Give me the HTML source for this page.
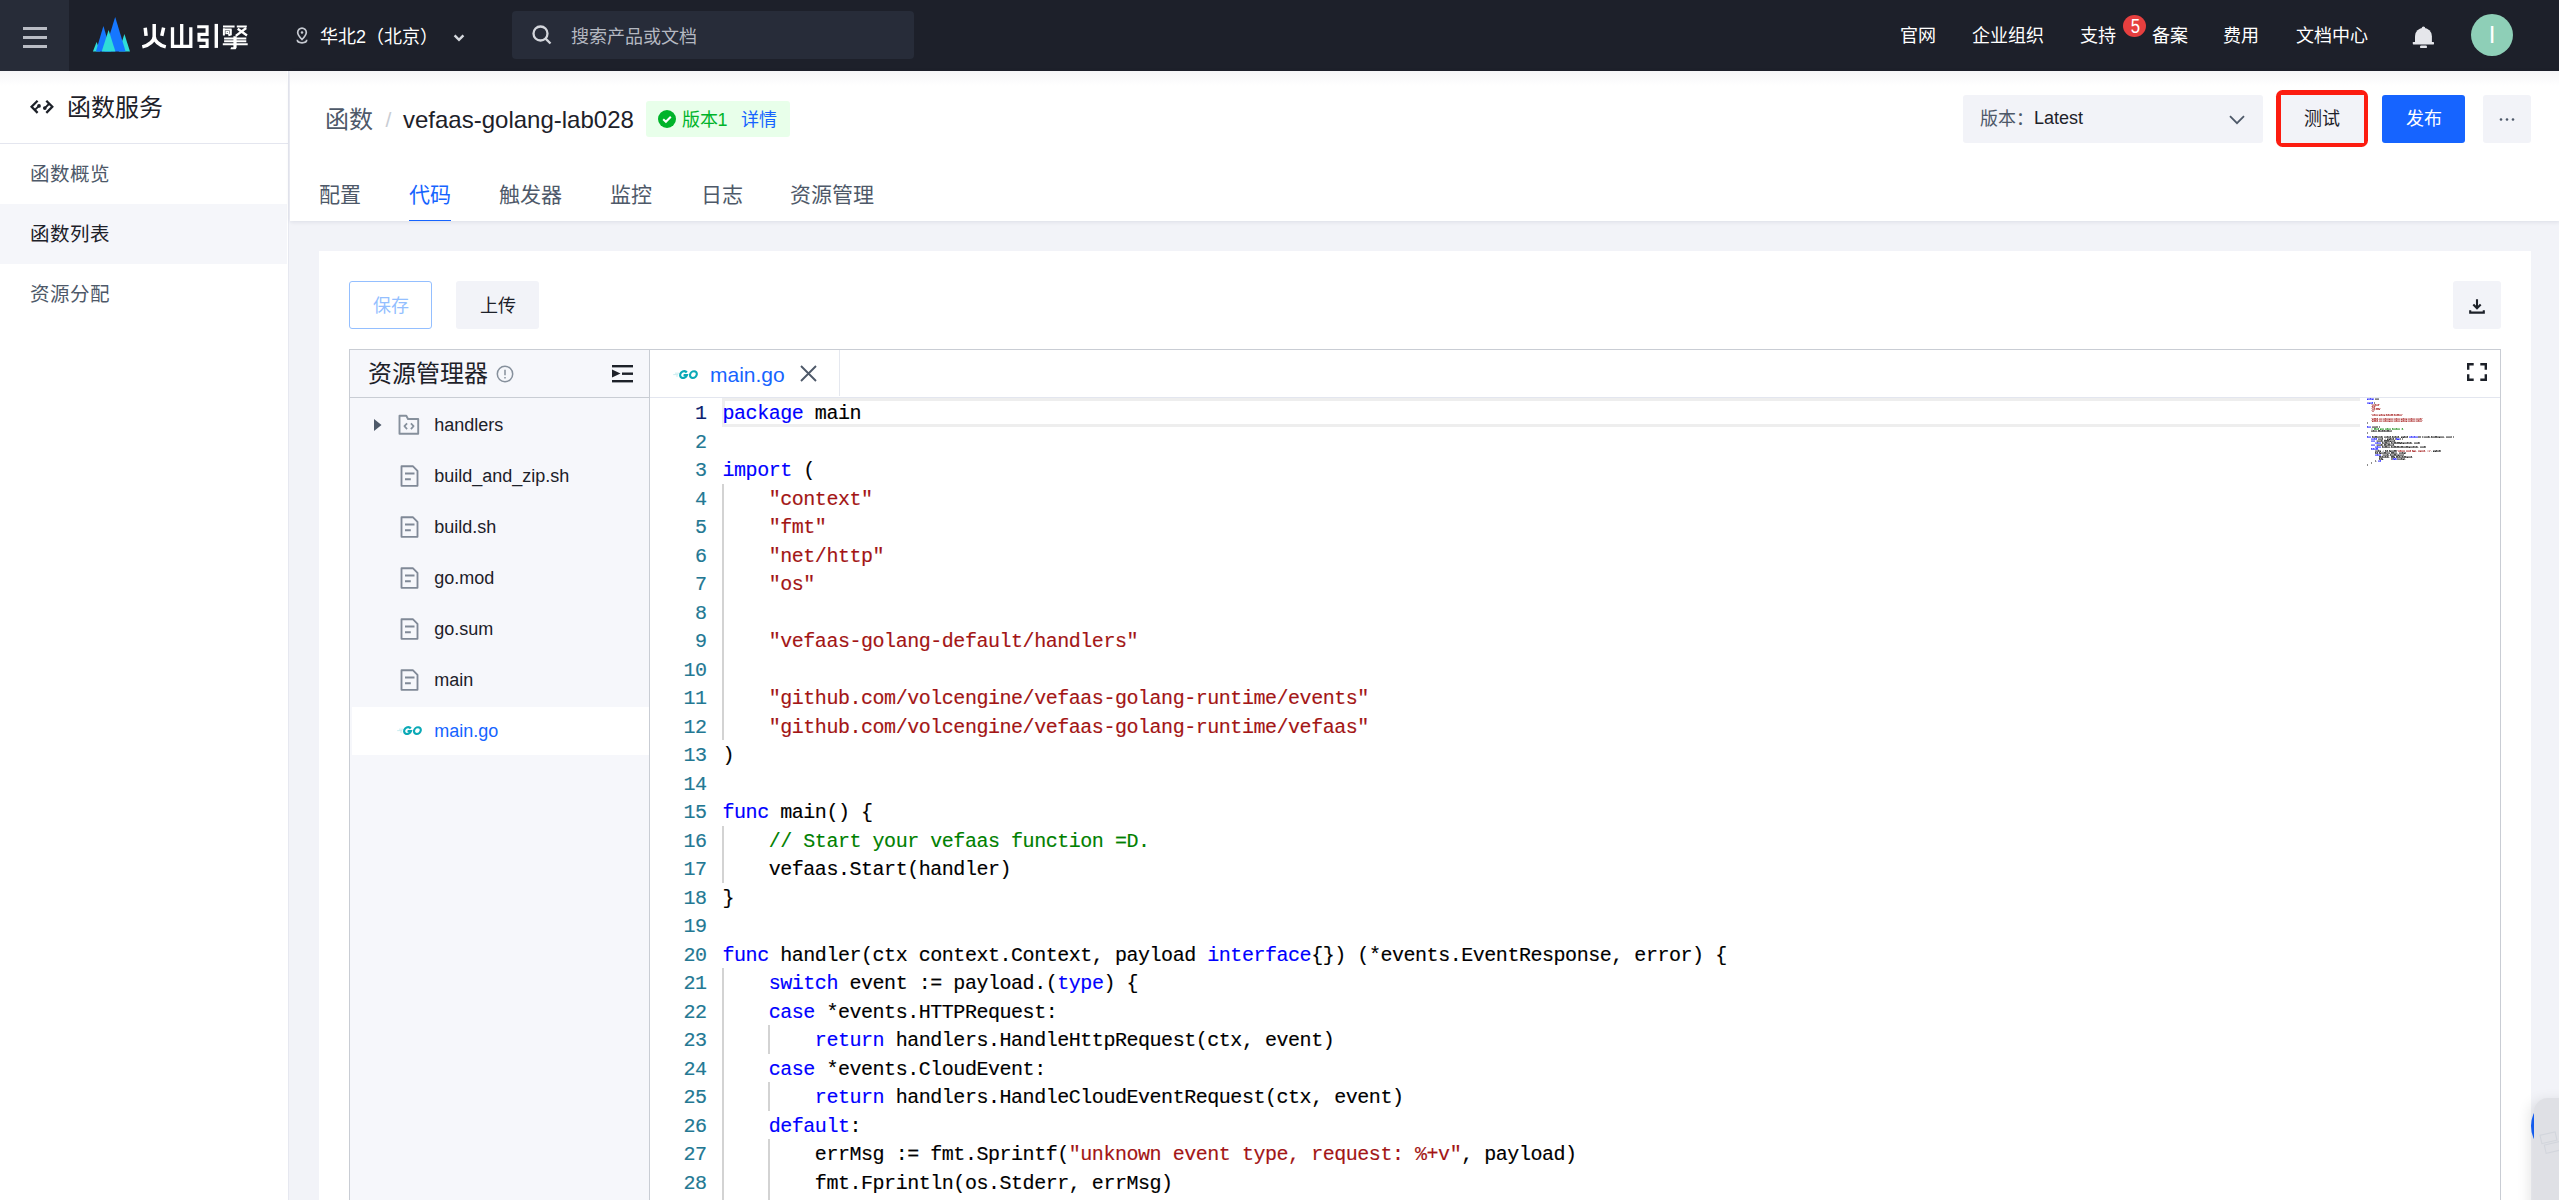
<!DOCTYPE html>
<html lang="zh-CN">
<head>
<meta charset="utf-8">
<title>函数服务 - 火山引擎</title>
<style>
*{box-sizing:border-box;margin:0;padding:0}
html,body{width:2559px;height:1200px;overflow:hidden;background:#f2f3f8}
body{font-family:"Liberation Sans",sans-serif;color:#1d2129;position:relative;-webkit-font-smoothing:antialiased}
.abs,.topbar *, .side *, .head *, .card *{position:absolute;white-space:nowrap}
svg{position:absolute;overflow:visible}

/* ---------- top bar ---------- */
.topbar{position:absolute;left:0;top:0;width:2559px;height:70.5px;background:#1d202a}
.burger{left:0;top:0;width:69px;height:70.5px;background:#272c38}
.burger i{left:23px;width:24px;height:3px;background:#b9bcc4}
.region{left:320px;top:23.5px;font-size:18px;line-height:26px;color:#fff}
.search{left:512px;top:11px;width:402px;height:48px;background:#272c39;border-radius:4px}
.search span{left:59px;top:12.5px;font-size:18px;line-height:26px;color:#b4b8c1}
.nav{top:22.7px;margin-left:-0.8px;font-size:18px;line-height:26px;color:#fff}
.badge{left:2123.2px;top:15px;width:23px;height:22px;border-radius:11.5px/11px;background:#e63f3f;color:#fff;font-size:19.5px;line-height:22.5px;text-align:center}
.badge span{left:0.7px;top:0;width:23px;transform:scaleX(.86)}
.avatar{left:2471px;top:13.8px;width:42.3px;height:42.3px;border-radius:22px;background:#8ecfb7;color:#fff;font-size:24px;line-height:41px;text-align:center}

/* ---------- sidebar ---------- */
.side{position:absolute;left:0;top:70.5px;width:288.5px;height:1130px;background:#fff;border-right:1.2px solid #e6e8f0}
.side .ttl{left:67px;top:20px;font-size:24px;line-height:34px;color:#1d2129}
.shade{left:0;top:0;height:15px;background:linear-gradient(#f6f6f8,#fff)}
.side .sep{left:0;top:72px;width:288px;height:1.5px;background:#e4e6ef}
.side .it{left:0;width:287px;height:60px;padding-left:30px;font-size:19.5px;line-height:61.2px;color:#4e5969}
.side .it.on{background:#f5f6fa;color:#1d2129}

/* ---------- page head ---------- */
.head{position:absolute;left:289.5px;top:70.5px;width:2270px;height:150.5px;background:#fff;box-shadow:0 1px 4px rgba(30,40,80,.10)}
.head .bc1{left:35.5px;top:32.5px;font-size:24px;line-height:34px;color:#4e5969}
.head .bcs{left:96px;top:32px;font-size:21px;line-height:34px;color:#c9cdd4}
.head .bc2{left:113.5px;top:32px;font-size:24px;line-height:34px;color:#1d2129}
.head .tag{left:356px;top:30.5px;width:144px;height:36px;background:#e8ffea;border-radius:3px}
.head .tag b{font-weight:normal;left:36px;top:5.8px;font-size:18px;line-height:26px;color:#00b42a}
.head .tag a{left:95px;top:5.8px;font-size:18px;line-height:26px;color:#1664ff}
.head .tab{top:108.2px;font-size:21px;line-height:32px;color:#4e5969}
.head .tab.on{color:#1664ff}
.head .ink{left:119.5px;top:149px;width:42px;height:1.5px;background:#1664ff}
.head .sel{left:1673.5px;top:24.5px;width:300px;height:48px;background:#f2f3f8;border-radius:3px}
.head .sel .l{left:17px;top:11px;font-size:18px;line-height:26px;color:#4e5969}
.head .sel .v{left:71px;top:10px;font-size:18px;line-height:26px;color:#1d2129}
.head .btn{top:24.5px;height:48px;border-radius:3px;font-size:18px;line-height:48px;text-align:center}
.head .red{left:1986.5px;top:19.5px;width:92px;height:57px;background:#fc1c10;border-radius:6.5px}

/* ---------- card ---------- */
.card{position:absolute;left:319px;top:251px;width:2212px;height:960px;background:#fff}
.card .b{top:30px;height:48px;border-radius:3px;font-size:18px;line-height:51px;text-align:center}
.ed{left:30px;top:98px;width:2152px;height:870px;border:1.5px solid #c9cdd4;background:#fff}
.exp{left:0;top:0;width:299.5px;height:870px;background:#f6f7fb;border-right:1.5px solid #c9cdd4}
.exp .hd{left:0;top:0;width:299px;height:48px;border-bottom:1.5px solid #c9cdd4}
.exp .hd span{left:18px;top:7.2px;font-size:24px;line-height:34px;color:#1d2129}
.exp .row{left:0;width:298px;height:48px;font-size:18px;line-height:48px;color:#1d2129}
.exp .row span{left:84.2px;top:0}
.exp .row.on{background:#fff;color:#1664ff}
.tabs{left:299.5px;top:0;width:1850px;height:47.8px;border-bottom:1.8px solid #e3e6ef;background:#fff}
.tabs .t{left:0;top:0;width:190px;height:46px;border-right:1.5px solid #e5e8ef;background:#fff}
.tabs .t span{left:60.5px;top:9px;font-size:21px;line-height:32px;color:#1664ff}

/* ---------- code ---------- */
.code{position:absolute;left:0;top:0;width:2559px;height:1200px;pointer-events:none;overflow:hidden}
.code .ln,.code .cl{position:absolute;white-space:pre;font-family:"Liberation Mono",monospace;font-size:20px;line-height:28.5px;height:28.5px;letter-spacing:-0.46px;margin-top:2px;-webkit-text-stroke:0.15px currentColor}
.code .ln{left:650px;width:56.5px;text-align:right;color:#237893}
.code .ln.act{color:#0b216f}
.code .cl{left:722.5px;color:#000}
.code .k{color:#0000ff}.code .s{color:#a31515}.code .c{color:#008000}
.code .ig{position:absolute;width:1.5px;background:#d3d3d3}
.code .cur{position:absolute;left:722px;top:398px;width:1638px;height:28.5px;border:3px solid #eeeeee;border-right:none}
.mm{position:absolute}
</style>
</head>
<body>

<!-- ================= TOP BAR ================= -->
<div class="topbar">
  <div class="burger"><i style="top:27px"></i><i style="top:35.5px"></i><i style="top:44.5px"></i></div>
  <svg style="left:92px;top:16px" width="40" height="37" viewBox="0 0 40 37">
    <polygon points="0.9,35.6 4.6,26 8.3,35.6" fill="#2fdcd8"/>
    <polygon points="26.8,35.6 32.4,17.9 38,35.6" fill="#2fdcd8"/>
    <polygon points="3.9,35.6 11.4,10 19,35.6" fill="#1677ff"/>
    <polygon points="12.5,35.6 23.2,1 33.6,35.6" fill="#1677ff"/>
    <polygon points="9.7,35.6 16.6,14 23.4,35.6" fill="#2fdcd8"/>
  </svg>
  <svg style="left:138px;top:18px" width="116" height="36" viewBox="0 0 116 36" fill="none" stroke="#fff" role="img" aria-label="火山引擎"><title>火山引擎</title>
    <path d="M16.2 5.9V18.5C16.2 22.6 11.5 27.2 4.3 28.9M16.2 18.5C16.2 22.6 20.9 27.2 27.8 28.9" stroke-width="3.5"/>
    <path d="M7.2 9.7 8.1 17.9M25.6 9.6 23.8 17.9" stroke-width="3.5"/>
    <path d="M34.5 9.3V28.3H52.8V9.3M43.7 5.9V28.3" stroke-width="3.3"/>
    <path d="M59.2 8.7H69.1V16.4H61V22.1H69.1V28.5H61.3" stroke-width="3.1"/>
    <path d="M78.3 5.9V29.9" stroke-width="3.4"/>
    <path d="M85 8.4H96.6M98.8 8.4H108.8M85 11.5H93.6M86.1 20.4H108.3M86.1 23.3H108.3M84.8 26.2H109.7" stroke-width="2"/>
    <path d="M85.9 10.5V17.4M92.8 11.4V16.4L90.3 17.2" stroke-width="2"/>
    <rect x="88.1" y="13.6" width="2.6" height="1.9" stroke-width="1.4"/>
    <path d="M99.7 10.7 109 17.5M108.2 10 97.8 17.8" stroke-width="2.3"/>
    <polygon points="95.4,18.2 98.6,18.2 98.6,29.8 97.6,31.2 92.4,31.3 93.1,29.3 95.4,29.2" fill="#fff" stroke="none"/>
  </svg>
  <svg style="left:295px;top:27px" width="14" height="18" viewBox="0 0 14 18" fill="none" stroke="#c6c9d1" stroke-width="1.7">
    <path d="M7 12.5C4.3 9.7 2.7 7.7 2.7 5.5a4.3 4.3 0 0 1 8.6 0c0 2.2-1.6 4.2-4.3 7z"/>
    <circle cx="7" cy="5.5" r="1.25" fill="#c6c9d1" stroke="none"/>
    <path d="M2.3 12.8c0 2.1 1.9 3 4.7 3s4.7-.900 4.7-3"/>
  </svg>
  <div class="region">华北2（北京）</div>
  <svg style="left:453px;top:33.5px" width="12" height="9" viewBox="0 0 12 9" fill="none" stroke="#d5d8de" stroke-width="2.5"><path d="M1.6 1.4 6 5.8 10.4 1.4"/></svg>
  <div class="search">
    <svg style="left:20px;top:14px" width="20" height="20" viewBox="0 0 20 20" fill="none" stroke="#d3d6dc" stroke-width="2.3"><circle cx="8.5" cy="8.5" r="7"/><path d="M13.6 13.6 18.5 18.5"/></svg>
    <span>搜索产品或文档</span>
  </div>
  <div class="nav" style="left:1901px">官网</div>
  <div class="nav" style="left:1973px">企业组织</div>
  <div class="nav" style="left:2081px">支持</div>
  <div class="badge"><span>5</span></div>
  <div class="nav" style="left:2153px">备案</div>
  <div class="nav" style="left:2224px">费用</div>
  <div class="nav" style="left:2296.5px">文档中心</div>
  <svg style="left:2412px;top:26px" width="23" height="23" viewBox="0 0 23 23" fill="#e5e6eb">
    <path d="M3 16V10.2A8.45 8.3 0 0 1 19.9 10.2V16z"/><circle cx="11.45" cy="2.3" r="1.8"/>
    <rect x="0.8" y="15.9" width="21.2" height="2.5" rx="0.6"/>
    <rect x="8" y="19.5" width="7" height="2.6" rx="1.2"/>
  </svg>
  <div class="avatar">I</div>
</div>

<!-- ================= SIDEBAR ================= -->
<div class="side">
  <div class="shade" style="width:287px"></div>
  <svg style="left:30px;top:27.5px" width="25" height="18" viewBox="0 0 25 18" fill="none" stroke="#1d2129" stroke-width="2.3">
    <path d="M7.6 2.7 1.6 8.8 7.6 14.9"/><path d="M16.3 2.7 22.3 8.8 16.3 14.9"/>
    <path d="M9 7.9 4.9 11.9M14.8 10.1 18.9 6" stroke-width="2"/>
    <circle cx="9" cy="7.9" r="1.85" fill="#1d2129" stroke="none"/><circle cx="14.8" cy="10.1" r="1.85" fill="#1d2129" stroke="none"/>
  </svg>
  <div class="ttl">函数服务</div>
  <div class="sep"></div>
  <div class="it" style="top:73.5px">函数概览</div>
  <div class="it on" style="top:133.5px">函数列表</div>
  <div class="it" style="top:193.5px">资源分配</div>
</div>

<!-- ================= PAGE HEAD ================= -->
<div class="head">
  <div class="shade" style="width:2270px"></div>
  <div class="bc1">函数</div><div class="bcs">/</div><div class="bc2">vefaas-golang-lab028</div>
  <div class="tag">
    <svg style="left:12px;top:9px" width="18" height="18" viewBox="0 0 18 18"><circle cx="9" cy="9" r="9" fill="#00b42a"/><path d="M5.2 9.2 7.9 11.8 12.8 6.7" fill="none" stroke="#fff" stroke-width="2"/></svg>
    <b>版本1</b><a>详情</a>
  </div>
  <div class="tab" style="left:29.5px">配置</div>
  <div class="tab on" style="left:119.5px">代码</div>
  <div class="tab" style="left:209px">触发器</div>
  <div class="tab" style="left:320.5px">监控</div>
  <div class="tab" style="left:411px">日志</div>
  <div class="tab" style="left:500.5px">资源管理</div>
  <div class="ink"></div>
  <div class="sel"><span class="l">版本：</span><span class="v">Latest</span>
    <svg style="left:266px;top:20px" width="16" height="10" viewBox="0 0 16 10" fill="none" stroke="#4e5969" stroke-width="1.8"><path d="M1 1.2 8 8.2 15 1.2"/></svg>
  </div>
  <div class="red"></div>
  <div class="btn" style="left:1991.5px;width:82.5px;height:47.5px;background:#f2f3f8;color:#1d2129;border-radius:0">测试</div>
  <div class="btn" style="left:2092.5px;width:83px;background:#1664ff;color:#fff">发布</div>
  <div class="btn" style="left:2193.5px;width:48px;background:#f2f3f8">
    <svg style="left:16px;top:22.5px" width="16" height="3" viewBox="0 0 16 3" fill="#4e5969"><circle cx="2" cy="1.5" r="1.3"/><circle cx="8" cy="1.5" r="1.3"/><circle cx="14" cy="1.5" r="1.3"/></svg>
  </div>
</div>

<!-- ================= CARD ================= -->
<div class="card">
  <div class="b" style="left:30px;width:83px;border:1.5px solid #94bfff;color:#94bfff;line-height:48px">保存</div>
  <div class="b" style="left:137px;width:83px;background:#f2f3f8;color:#1d2129">上传</div>
  <div class="b" style="left:2134px;width:48px;background:#f2f3f8">
    <svg style="left:16px;top:16.5px" width="16" height="16" viewBox="0 0 16 16" fill="none" stroke="#1d2129" stroke-width="2.1"><path d="M8 1.2v9.3M4.3 6.6 8 10.3l3.7-3.7M1.2 12.2v2.4h13.6v-2.4"/></svg>
  </div>
  <div class="ed">
    <div class="exp">
      <div class="hd"><span>资源管理器</span>
        <svg style="left:146px;top:15px" width="18" height="18" viewBox="0 0 18 18" fill="none" stroke="#86909c" stroke-width="1.5"><circle cx="9" cy="9" r="7.7"/><path d="M9 4.8v5.4M9 12v1.5"/></svg>
        <svg style="left:262px;top:15px" width="21" height="18" viewBox="0 0 21 18" fill="#1d2129"><rect x="0" y="0" width="21" height="2.4"/><rect x="10" y="7.5" width="11" height="2.4"/><rect x="0" y="15" width="21" height="2.4"/><path d="M0 4.4 8.5 8.5 0 12.6z"/></svg>
      </div>
      <div class="row" style="top:50.5px">
        <svg style="left:24px;top:18.5px" width="8" height="12" viewBox="0 0 8 12" fill="#4e5969"><path d="M0 0 7.5 6 0 12z"/></svg>
        <svg style="left:48px;top:13.5px" width="22" height="22" viewBox="0 0 22 22" fill="none" stroke="#86909c" stroke-width="1.9" stroke-linejoin="round"><path d="M1.5 1.8h6.8l1.7 3.2h10.2v14.7H1.5z"/><path d="M9.1 9.3 6.4 12.2l2.7 2.9M12.9 9.3l2.7 2.9-2.7 2.9" stroke-width="1.7"/></svg>
        <span>handlers</span></div>
      <div class="row" style="top:101.5px"><svg style="left:50px;top:13.5px" width="20" height="22" viewBox="0 0 20 22" fill="none" stroke="#808997" stroke-width="1.85" stroke-linejoin="round"><path d="M1.5 1.2h11.3l4.7 4.7v14.9H1.5z"/><path d="M5 8.6h9.5M5 14.3h5.8" stroke-width="2"/></svg><span>build_and_zip.sh</span></div>
      <div class="row" style="top:152.5px"><svg style="left:50px;top:13.5px" width="20" height="22" viewBox="0 0 20 22" fill="none" stroke="#808997" stroke-width="1.85" stroke-linejoin="round"><path d="M1.5 1.2h11.3l4.7 4.7v14.9H1.5z"/><path d="M5 8.6h9.5M5 14.3h5.8" stroke-width="2"/></svg><span>build.sh</span></div>
      <div class="row" style="top:203.5px"><svg style="left:50px;top:13.5px" width="20" height="22" viewBox="0 0 20 22" fill="none" stroke="#808997" stroke-width="1.85" stroke-linejoin="round"><path d="M1.5 1.2h11.3l4.7 4.7v14.9H1.5z"/><path d="M5 8.6h9.5M5 14.3h5.8" stroke-width="2"/></svg><span>go.mod</span></div>
      <div class="row" style="top:254.5px"><svg style="left:50px;top:13.5px" width="20" height="22" viewBox="0 0 20 22" fill="none" stroke="#808997" stroke-width="1.85" stroke-linejoin="round"><path d="M1.5 1.2h11.3l4.7 4.7v14.9H1.5z"/><path d="M5 8.6h9.5M5 14.3h5.8" stroke-width="2"/></svg><span>go.sum</span></div>
      <div class="row" style="top:305.5px"><svg style="left:50px;top:13.5px" width="20" height="22" viewBox="0 0 20 22" fill="none" stroke="#808997" stroke-width="1.85" stroke-linejoin="round"><path d="M1.5 1.2h11.3l4.7 4.7v14.9H1.5z"/><path d="M5 8.6h9.5M5 14.3h5.8" stroke-width="2"/></svg><span>main</span></div>
      <div class="row on" style="top:356.5px;left:2px;width:297px"><svg style="left:44.4px;top:18.7px" width="26" height="11" viewBox="0 0 26 11" fill="none" stroke="#0aa9b6"><g transform="translate(1.1 0) skewX(-9)"><path d="M14.2 3.5A3.5 3.4 0 1 0 14.9 6.1H11.4" stroke-width="2.15"/><ellipse cx="21.2" cy="5.6" rx="3.35" ry="3.4" stroke-width="2.15"/></g><path d="M3 4.2h4M1.2 5.6h5M4 7h2" stroke-width="0.7" stroke-opacity="0.3"/></svg><span style="left:82.2px">main.go</span></div>
    </div>
    <div class="tabs">
      <div class="t">
        <svg style="left:22.9px;top:19.2px" width="26" height="11" viewBox="0 0 26 11" fill="none" stroke="#0aa9b6"><g transform="translate(1.1 0) skewX(-9)"><path d="M14.2 3.5A3.5 3.4 0 1 0 14.9 6.1H11.4" stroke-width="2.15"/><ellipse cx="21.2" cy="5.6" rx="3.35" ry="3.4" stroke-width="2.15"/></g><path d="M3 4.2h4M1.2 5.6h5M4 7h2" stroke-width="0.7" stroke-opacity="0.3"/></svg>
        <span>main.go</span>
        <svg style="left:150.5px;top:14.5px" width="17" height="17" viewBox="0 0 17 17" fill="none" stroke="#4e5969" stroke-width="1.9"><path d="M1 1 16 16M16 1 1 16"/></svg>
      </div>
      <svg style="left:1817px;top:13px" width="20" height="18" viewBox="0 0 20 18" fill="none" stroke="#1d2129" stroke-width="2.4"><path d="M1.2 6.7V1.2h5.5M13.3 1.2h5.5v5.5M18.8 11.3v5.5h-5.5M6.7 16.8H1.2v-5.5"/></svg>
    </div>
  </div>
</div>

<!-- ================= CODE (absolute page coords) ================= -->
<div class="code">
  <div class="cur"></div>
  <div class="ig" style="left:722px;top:483.5px;height:256.5px"></div><div class="ig" style="left:722px;top:825.5px;height:57px"></div><div class="ig" style="left:722px;top:968px;height:370.5px"></div><div class="ig" style="left:768px;top:1025px;height:28.5px"></div><div class="ig" style="left:768px;top:1082px;height:28.5px"></div><div class="ig" style="left:768px;top:1139px;height:171px"></div>
<div class="ln act" style="top:398px">1</div><div class="cl" style="top:398px"><span class="k">package</span> main</div>
<div class="ln" style="top:426.5px">2</div><div class="cl" style="top:426.5px"></div>
<div class="ln" style="top:455px">3</div><div class="cl" style="top:455px"><span class="k">import</span> (</div>
<div class="ln" style="top:483.5px">4</div><div class="cl" style="top:483.5px">    <span class="s">&quot;context&quot;</span></div>
<div class="ln" style="top:512px">5</div><div class="cl" style="top:512px">    <span class="s">&quot;fmt&quot;</span></div>
<div class="ln" style="top:540.5px">6</div><div class="cl" style="top:540.5px">    <span class="s">&quot;net/http&quot;</span></div>
<div class="ln" style="top:569px">7</div><div class="cl" style="top:569px">    <span class="s">&quot;os&quot;</span></div>
<div class="ln" style="top:597.5px">8</div><div class="cl" style="top:597.5px"></div>
<div class="ln" style="top:626px">9</div><div class="cl" style="top:626px">    <span class="s">&quot;vefaas-golang-default/handlers&quot;</span></div>
<div class="ln" style="top:654.5px">10</div><div class="cl" style="top:654.5px"></div>
<div class="ln" style="top:683px">11</div><div class="cl" style="top:683px">    <span class="s">&quot;github.com/volcengine/vefaas-golang-runtime/events&quot;</span></div>
<div class="ln" style="top:711.5px">12</div><div class="cl" style="top:711.5px">    <span class="s">&quot;github.com/volcengine/vefaas-golang-runtime/vefaas&quot;</span></div>
<div class="ln" style="top:740px">13</div><div class="cl" style="top:740px">)</div>
<div class="ln" style="top:768.5px">14</div><div class="cl" style="top:768.5px"></div>
<div class="ln" style="top:797px">15</div><div class="cl" style="top:797px"><span class="k">func</span> main() {</div>
<div class="ln" style="top:825.5px">16</div><div class="cl" style="top:825.5px">    <span class="c">// Start your vefaas function =D.</span></div>
<div class="ln" style="top:854px">17</div><div class="cl" style="top:854px">    vefaas.Start(handler)</div>
<div class="ln" style="top:882.5px">18</div><div class="cl" style="top:882.5px">}</div>
<div class="ln" style="top:911px">19</div><div class="cl" style="top:911px"></div>
<div class="ln" style="top:939.5px">20</div><div class="cl" style="top:939.5px"><span class="k">func</span> handler(ctx context.Context, payload <span class="k">interface</span>{}) (*events.EventResponse, error) {</div>
<div class="ln" style="top:968px">21</div><div class="cl" style="top:968px">    <span class="k">switch</span> event := payload.(<span class="k">type</span>) {</div>
<div class="ln" style="top:996.5px">22</div><div class="cl" style="top:996.5px">    <span class="k">case</span> *events.HTTPRequest:</div>
<div class="ln" style="top:1025px">23</div><div class="cl" style="top:1025px">        <span class="k">return</span> handlers.HandleHttpRequest(ctx, event)</div>
<div class="ln" style="top:1053.5px">24</div><div class="cl" style="top:1053.5px">    <span class="k">case</span> *events.CloudEvent:</div>
<div class="ln" style="top:1082px">25</div><div class="cl" style="top:1082px">        <span class="k">return</span> handlers.HandleCloudEventRequest(ctx, event)</div>
<div class="ln" style="top:1110.5px">26</div><div class="cl" style="top:1110.5px">    <span class="k">default</span>:</div>
<div class="ln" style="top:1139px">27</div><div class="cl" style="top:1139px">        errMsg := fmt.Sprintf(<span class="s">&quot;unknown event type, request: %+v&quot;</span>, payload)</div>
<div class="ln" style="top:1167.5px">28</div><div class="cl" style="top:1167.5px">        fmt.Fprintln(os.Stderr, errMsg)</div>
<div class="ln" style="top:1196px">29</div><div class="cl" style="top:1196px">        <span class="k">return</span> &amp;events.EventResponse{</div>
  <svg class="mm" style="left:2367px;top:398px" width="100" height="72" viewBox="0 0 100 72"><rect x="0" y="0.5" width="1" height="1.5" fill="#0000ff" fill-opacity="0.8"/><rect x="1" y="0.5" width="2" height="1.2" fill="#0000ff" fill-opacity="0.7"/><rect x="3" y="0.15" width="1" height="1.55" fill="#0000ff" fill-opacity="0.82"/><rect x="4" y="0.5" width="1" height="1.2" fill="#0000ff" fill-opacity="0.7"/><rect x="5" y="0.5" width="1" height="1.5" fill="#0000ff" fill-opacity="0.8"/><rect x="6" y="0.5" width="1" height="1.2" fill="#0000ff" fill-opacity="0.7"/><rect x="8" y="0.5" width="4" height="1.2" fill="#000000" fill-opacity="0.7"/><rect x="0" y="4.5" width="2" height="1.2" fill="#0000ff" fill-opacity="0.7"/><rect x="2" y="4.5" width="1" height="1.5" fill="#0000ff" fill-opacity="0.8"/><rect x="3" y="4.5" width="2" height="1.2" fill="#0000ff" fill-opacity="0.7"/><rect x="5" y="4.15" width="1" height="1.55" fill="#0000ff" fill-opacity="0.82"/><rect x="7" y="4.1" width="1" height="1.8" fill="#000000" fill-opacity="0.5"/><rect x="4" y="6.2" width="1" height="0.7" fill="#a31515" fill-opacity="0.4"/><rect x="5" y="6.5" width="3" height="1.2" fill="#a31515" fill-opacity="0.7"/><rect x="8" y="6.15" width="1" height="1.55" fill="#a31515" fill-opacity="0.82"/><rect x="9" y="6.5" width="2" height="1.2" fill="#a31515" fill-opacity="0.7"/><rect x="11" y="6.15" width="1" height="1.55" fill="#a31515" fill-opacity="0.82"/><rect x="12" y="6.2" width="1" height="0.7" fill="#a31515" fill-opacity="0.4"/><rect x="4" y="8.2" width="1" height="0.7" fill="#a31515" fill-opacity="0.4"/><rect x="5" y="8.15" width="1" height="1.55" fill="#a31515" fill-opacity="0.82"/><rect x="6" y="8.5" width="1" height="1.2" fill="#a31515" fill-opacity="0.7"/><rect x="7" y="8.15" width="1" height="1.55" fill="#a31515" fill-opacity="0.82"/><rect x="8" y="8.2" width="1" height="0.7" fill="#a31515" fill-opacity="0.4"/><rect x="4" y="10.2" width="1" height="0.7" fill="#a31515" fill-opacity="0.4"/><rect x="5" y="10.5" width="2" height="1.2" fill="#a31515" fill-opacity="0.7"/><rect x="7" y="10.15" width="1" height="1.55" fill="#a31515" fill-opacity="0.82"/><rect x="8" y="10.6" width="1" height="0.9" fill="#a31515" fill-opacity="0.42"/><rect x="9" y="10.15" width="3" height="1.55" fill="#a31515" fill-opacity="0.82"/><rect x="12" y="10.5" width="1" height="1.5" fill="#a31515" fill-opacity="0.8"/><rect x="13" y="10.2" width="1" height="0.7" fill="#a31515" fill-opacity="0.4"/><rect x="4" y="12.2" width="1" height="0.7" fill="#a31515" fill-opacity="0.4"/><rect x="5" y="12.5" width="2" height="1.2" fill="#a31515" fill-opacity="0.7"/><rect x="7" y="12.2" width="1" height="0.7" fill="#a31515" fill-opacity="0.4"/><rect x="4" y="16.2" width="1" height="0.7" fill="#a31515" fill-opacity="0.4"/><rect x="5" y="16.5" width="2" height="1.2" fill="#a31515" fill-opacity="0.7"/><rect x="7" y="16.15" width="1" height="1.55" fill="#a31515" fill-opacity="0.82"/><rect x="8" y="16.5" width="3" height="1.2" fill="#a31515" fill-opacity="0.7"/><rect x="11" y="16.6" width="1" height="0.9" fill="#a31515" fill-opacity="0.42"/><rect x="12" y="16.5" width="1" height="1.5" fill="#a31515" fill-opacity="0.8"/><rect x="13" y="16.5" width="1" height="1.2" fill="#a31515" fill-opacity="0.7"/><rect x="14" y="16.15" width="1" height="1.55" fill="#a31515" fill-opacity="0.82"/><rect x="15" y="16.5" width="2" height="1.2" fill="#a31515" fill-opacity="0.7"/><rect x="17" y="16.5" width="1" height="1.5" fill="#a31515" fill-opacity="0.8"/><rect x="18" y="16.6" width="1" height="0.9" fill="#a31515" fill-opacity="0.42"/><rect x="19" y="16.15" width="1" height="1.55" fill="#a31515" fill-opacity="0.82"/><rect x="20" y="16.5" width="1" height="1.2" fill="#a31515" fill-opacity="0.7"/><rect x="21" y="16.15" width="1" height="1.55" fill="#a31515" fill-opacity="0.82"/><rect x="22" y="16.5" width="2" height="1.2" fill="#a31515" fill-opacity="0.7"/><rect x="24" y="16.15" width="2" height="1.55" fill="#a31515" fill-opacity="0.82"/><rect x="26" y="16.6" width="1" height="0.9" fill="#a31515" fill-opacity="0.42"/><rect x="27" y="16.15" width="1" height="1.55" fill="#a31515" fill-opacity="0.82"/><rect x="28" y="16.5" width="2" height="1.2" fill="#a31515" fill-opacity="0.7"/><rect x="30" y="16.15" width="2" height="1.55" fill="#a31515" fill-opacity="0.82"/><rect x="32" y="16.5" width="3" height="1.2" fill="#a31515" fill-opacity="0.7"/><rect x="35" y="16.2" width="1" height="0.7" fill="#a31515" fill-opacity="0.4"/><rect x="4" y="20.2" width="1" height="0.7" fill="#a31515" fill-opacity="0.4"/><rect x="5" y="20.5" width="1" height="1.5" fill="#a31515" fill-opacity="0.8"/><rect x="6" y="20.5" width="1" height="1.2" fill="#a31515" fill-opacity="0.7"/><rect x="7" y="20.15" width="2" height="1.55" fill="#a31515" fill-opacity="0.82"/><rect x="9" y="20.5" width="1" height="1.2" fill="#a31515" fill-opacity="0.7"/><rect x="10" y="20.15" width="1" height="1.55" fill="#a31515" fill-opacity="0.82"/><rect x="11" y="21.1" width="1" height="0.6" fill="#a31515" fill-opacity="0.28"/><rect x="12" y="20.5" width="3" height="1.2" fill="#a31515" fill-opacity="0.7"/><rect x="15" y="20.6" width="1" height="0.9" fill="#a31515" fill-opacity="0.42"/><rect x="16" y="20.5" width="2" height="1.2" fill="#a31515" fill-opacity="0.7"/><rect x="18" y="20.15" width="1" height="1.55" fill="#a31515" fill-opacity="0.82"/><rect x="19" y="20.5" width="3" height="1.2" fill="#a31515" fill-opacity="0.7"/><rect x="22" y="20.5" width="1" height="1.5" fill="#a31515" fill-opacity="0.8"/><rect x="23" y="20.5" width="3" height="1.2" fill="#a31515" fill-opacity="0.7"/><rect x="26" y="20.6" width="1" height="0.9" fill="#a31515" fill-opacity="0.42"/><rect x="27" y="20.5" width="2" height="1.2" fill="#a31515" fill-opacity="0.7"/><rect x="29" y="20.15" width="1" height="1.55" fill="#a31515" fill-opacity="0.82"/><rect x="30" y="20.5" width="3" height="1.2" fill="#a31515" fill-opacity="0.7"/><rect x="33" y="20.6" width="1" height="0.9" fill="#a31515" fill-opacity="0.42"/><rect x="34" y="20.5" width="1" height="1.5" fill="#a31515" fill-opacity="0.8"/><rect x="35" y="20.5" width="1" height="1.2" fill="#a31515" fill-opacity="0.7"/><rect x="36" y="20.15" width="1" height="1.55" fill="#a31515" fill-opacity="0.82"/><rect x="37" y="20.5" width="2" height="1.2" fill="#a31515" fill-opacity="0.7"/><rect x="39" y="20.5" width="1" height="1.5" fill="#a31515" fill-opacity="0.8"/><rect x="40" y="20.6" width="1" height="0.9" fill="#a31515" fill-opacity="0.42"/><rect x="41" y="20.5" width="3" height="1.2" fill="#a31515" fill-opacity="0.7"/><rect x="44" y="20.15" width="1" height="1.55" fill="#a31515" fill-opacity="0.82"/><rect x="45" y="20.5" width="3" height="1.2" fill="#a31515" fill-opacity="0.7"/><rect x="48" y="20.6" width="1" height="0.9" fill="#a31515" fill-opacity="0.42"/><rect x="49" y="20.5" width="4" height="1.2" fill="#a31515" fill-opacity="0.7"/><rect x="53" y="20.15" width="1" height="1.55" fill="#a31515" fill-opacity="0.82"/><rect x="54" y="20.5" width="1" height="1.2" fill="#a31515" fill-opacity="0.7"/><rect x="55" y="20.2" width="1" height="0.7" fill="#a31515" fill-opacity="0.4"/><rect x="4" y="22.2" width="1" height="0.7" fill="#a31515" fill-opacity="0.4"/><rect x="5" y="22.5" width="1" height="1.5" fill="#a31515" fill-opacity="0.8"/><rect x="6" y="22.5" width="1" height="1.2" fill="#a31515" fill-opacity="0.7"/><rect x="7" y="22.15" width="2" height="1.55" fill="#a31515" fill-opacity="0.82"/><rect x="9" y="22.5" width="1" height="1.2" fill="#a31515" fill-opacity="0.7"/><rect x="10" y="22.15" width="1" height="1.55" fill="#a31515" fill-opacity="0.82"/><rect x="11" y="23.1" width="1" height="0.6" fill="#a31515" fill-opacity="0.28"/><rect x="12" y="22.5" width="3" height="1.2" fill="#a31515" fill-opacity="0.7"/><rect x="15" y="22.6" width="1" height="0.9" fill="#a31515" fill-opacity="0.42"/><rect x="16" y="22.5" width="2" height="1.2" fill="#a31515" fill-opacity="0.7"/><rect x="18" y="22.15" width="1" height="1.55" fill="#a31515" fill-opacity="0.82"/><rect x="19" y="22.5" width="3" height="1.2" fill="#a31515" fill-opacity="0.7"/><rect x="22" y="22.5" width="1" height="1.5" fill="#a31515" fill-opacity="0.8"/><rect x="23" y="22.5" width="3" height="1.2" fill="#a31515" fill-opacity="0.7"/><rect x="26" y="22.6" width="1" height="0.9" fill="#a31515" fill-opacity="0.42"/><rect x="27" y="22.5" width="2" height="1.2" fill="#a31515" fill-opacity="0.7"/><rect x="29" y="22.15" width="1" height="1.55" fill="#a31515" fill-opacity="0.82"/><rect x="30" y="22.5" width="3" height="1.2" fill="#a31515" fill-opacity="0.7"/><rect x="33" y="22.6" width="1" height="0.9" fill="#a31515" fill-opacity="0.42"/><rect x="34" y="22.5" width="1" height="1.5" fill="#a31515" fill-opacity="0.8"/><rect x="35" y="22.5" width="1" height="1.2" fill="#a31515" fill-opacity="0.7"/><rect x="36" y="22.15" width="1" height="1.55" fill="#a31515" fill-opacity="0.82"/><rect x="37" y="22.5" width="2" height="1.2" fill="#a31515" fill-opacity="0.7"/><rect x="39" y="22.5" width="1" height="1.5" fill="#a31515" fill-opacity="0.8"/><rect x="40" y="22.6" width="1" height="0.9" fill="#a31515" fill-opacity="0.42"/><rect x="41" y="22.5" width="3" height="1.2" fill="#a31515" fill-opacity="0.7"/><rect x="44" y="22.15" width="1" height="1.55" fill="#a31515" fill-opacity="0.82"/><rect x="45" y="22.5" width="3" height="1.2" fill="#a31515" fill-opacity="0.7"/><rect x="48" y="22.6" width="1" height="0.9" fill="#a31515" fill-opacity="0.42"/><rect x="49" y="22.5" width="2" height="1.2" fill="#a31515" fill-opacity="0.7"/><rect x="51" y="22.15" width="1" height="1.55" fill="#a31515" fill-opacity="0.82"/><rect x="52" y="22.5" width="3" height="1.2" fill="#a31515" fill-opacity="0.7"/><rect x="55" y="22.2" width="1" height="0.7" fill="#a31515" fill-opacity="0.4"/><rect x="0" y="24.1" width="1" height="1.8" fill="#000000" fill-opacity="0.5"/><rect x="0" y="28.15" width="1" height="1.55" fill="#0000ff" fill-opacity="0.82"/><rect x="1" y="28.5" width="3" height="1.2" fill="#0000ff" fill-opacity="0.7"/><rect x="5" y="28.5" width="4" height="1.2" fill="#000000" fill-opacity="0.7"/><rect x="9" y="28.1" width="2" height="1.8" fill="#000000" fill-opacity="0.5"/><rect x="12" y="28.1" width="1" height="1.8" fill="#000000" fill-opacity="0.5"/><rect x="4" y="30.6" width="2" height="0.9" fill="#008000" fill-opacity="0.42"/><rect x="7" y="30.15" width="2" height="1.55" fill="#008000" fill-opacity="0.82"/><rect x="9" y="30.5" width="2" height="1.2" fill="#008000" fill-opacity="0.7"/><rect x="11" y="30.15" width="1" height="1.55" fill="#008000" fill-opacity="0.82"/><rect x="13" y="30.5" width="1" height="1.5" fill="#008000" fill-opacity="0.8"/><rect x="14" y="30.5" width="3" height="1.2" fill="#008000" fill-opacity="0.7"/><rect x="18" y="30.5" width="2" height="1.2" fill="#008000" fill-opacity="0.7"/><rect x="20" y="30.15" width="1" height="1.55" fill="#008000" fill-opacity="0.82"/><rect x="21" y="30.5" width="3" height="1.2" fill="#008000" fill-opacity="0.7"/><rect x="25" y="30.15" width="1" height="1.55" fill="#008000" fill-opacity="0.82"/><rect x="26" y="30.5" width="3" height="1.2" fill="#008000" fill-opacity="0.7"/><rect x="29" y="30.15" width="1" height="1.55" fill="#008000" fill-opacity="0.82"/><rect x="30" y="30.5" width="3" height="1.2" fill="#008000" fill-opacity="0.7"/><rect x="34" y="30.6" width="1" height="0.9" fill="#008000" fill-opacity="0.42"/><rect x="35" y="30.15" width="1" height="1.55" fill="#008000" fill-opacity="0.82"/><rect x="36" y="31.1" width="1" height="0.6" fill="#008000" fill-opacity="0.28"/><rect x="4" y="32.5" width="2" height="1.2" fill="#000000" fill-opacity="0.7"/><rect x="6" y="32.15" width="1" height="1.55" fill="#000000" fill-opacity="0.82"/><rect x="7" y="32.5" width="3" height="1.2" fill="#000000" fill-opacity="0.7"/><rect x="10" y="33.1" width="1" height="0.6" fill="#000000" fill-opacity="0.28"/><rect x="11" y="32.15" width="2" height="1.55" fill="#000000" fill-opacity="0.82"/><rect x="13" y="32.5" width="2" height="1.2" fill="#000000" fill-opacity="0.7"/><rect x="15" y="32.15" width="1" height="1.55" fill="#000000" fill-opacity="0.82"/><rect x="16" y="32.1" width="1" height="1.8" fill="#000000" fill-opacity="0.5"/><rect x="17" y="32.15" width="1" height="1.55" fill="#000000" fill-opacity="0.82"/><rect x="18" y="32.5" width="2" height="1.2" fill="#000000" fill-opacity="0.7"/><rect x="20" y="32.15" width="2" height="1.55" fill="#000000" fill-opacity="0.82"/><rect x="22" y="32.5" width="2" height="1.2" fill="#000000" fill-opacity="0.7"/><rect x="24" y="32.1" width="1" height="1.8" fill="#000000" fill-opacity="0.5"/><rect x="0" y="34.1" width="1" height="1.8" fill="#000000" fill-opacity="0.5"/><rect x="0" y="38.15" width="1" height="1.55" fill="#0000ff" fill-opacity="0.82"/><rect x="1" y="38.5" width="3" height="1.2" fill="#0000ff" fill-opacity="0.7"/><rect x="5" y="38.15" width="1" height="1.55" fill="#000000" fill-opacity="0.82"/><rect x="6" y="38.5" width="2" height="1.2" fill="#000000" fill-opacity="0.7"/><rect x="8" y="38.15" width="2" height="1.55" fill="#000000" fill-opacity="0.82"/><rect x="10" y="38.5" width="2" height="1.2" fill="#000000" fill-opacity="0.7"/><rect x="12" y="38.1" width="1" height="1.8" fill="#000000" fill-opacity="0.5"/><rect x="13" y="38.5" width="1" height="1.2" fill="#000000" fill-opacity="0.7"/><rect x="14" y="38.15" width="1" height="1.55" fill="#000000" fill-opacity="0.82"/><rect x="15" y="38.5" width="1" height="1.2" fill="#000000" fill-opacity="0.7"/><rect x="17" y="38.5" width="3" height="1.2" fill="#000000" fill-opacity="0.7"/><rect x="20" y="38.15" width="1" height="1.55" fill="#000000" fill-opacity="0.82"/><rect x="21" y="38.5" width="2" height="1.2" fill="#000000" fill-opacity="0.7"/><rect x="23" y="38.15" width="1" height="1.55" fill="#000000" fill-opacity="0.82"/><rect x="24" y="39.1" width="1" height="0.6" fill="#000000" fill-opacity="0.28"/><rect x="25" y="38.15" width="1" height="1.55" fill="#000000" fill-opacity="0.82"/><rect x="26" y="38.5" width="2" height="1.2" fill="#000000" fill-opacity="0.7"/><rect x="28" y="38.15" width="1" height="1.55" fill="#000000" fill-opacity="0.82"/><rect x="29" y="38.5" width="2" height="1.2" fill="#000000" fill-opacity="0.7"/><rect x="31" y="38.15" width="1" height="1.55" fill="#000000" fill-opacity="0.82"/><rect x="32" y="39.1" width="1" height="0.6" fill="#000000" fill-opacity="0.28"/><rect x="34" y="38.5" width="1" height="1.5" fill="#000000" fill-opacity="0.8"/><rect x="35" y="38.5" width="1" height="1.2" fill="#000000" fill-opacity="0.7"/><rect x="36" y="38.5" width="1" height="1.5" fill="#000000" fill-opacity="0.8"/><rect x="37" y="38.15" width="1" height="1.55" fill="#000000" fill-opacity="0.82"/><rect x="38" y="38.5" width="2" height="1.2" fill="#000000" fill-opacity="0.7"/><rect x="40" y="38.15" width="1" height="1.55" fill="#000000" fill-opacity="0.82"/><rect x="42" y="38.5" width="2" height="1.2" fill="#0000ff" fill-opacity="0.7"/><rect x="44" y="38.15" width="1" height="1.55" fill="#0000ff" fill-opacity="0.82"/><rect x="45" y="38.5" width="2" height="1.2" fill="#0000ff" fill-opacity="0.7"/><rect x="47" y="38.15" width="1" height="1.55" fill="#0000ff" fill-opacity="0.82"/><rect x="48" y="38.5" width="3" height="1.2" fill="#0000ff" fill-opacity="0.7"/><rect x="51" y="38.1" width="3" height="1.8" fill="#000000" fill-opacity="0.5"/><rect x="55" y="38.1" width="1" height="1.8" fill="#000000" fill-opacity="0.5"/><rect x="56" y="38.6" width="1" height="0.9" fill="#000000" fill-opacity="0.42"/><rect x="57" y="38.5" width="4" height="1.2" fill="#000000" fill-opacity="0.7"/><rect x="61" y="38.15" width="1" height="1.55" fill="#000000" fill-opacity="0.82"/><rect x="62" y="38.5" width="1" height="1.2" fill="#000000" fill-opacity="0.7"/><rect x="63" y="39.1" width="1" height="0.6" fill="#000000" fill-opacity="0.28"/><rect x="64" y="38.15" width="1" height="1.55" fill="#000000" fill-opacity="0.82"/><rect x="65" y="38.5" width="3" height="1.2" fill="#000000" fill-opacity="0.7"/><rect x="68" y="38.15" width="2" height="1.55" fill="#000000" fill-opacity="0.82"/><rect x="70" y="38.5" width="2" height="1.2" fill="#000000" fill-opacity="0.7"/><rect x="72" y="38.5" width="1" height="1.5" fill="#000000" fill-opacity="0.8"/><rect x="73" y="38.5" width="4" height="1.2" fill="#000000" fill-opacity="0.7"/><rect x="77" y="39.1" width="1" height="0.6" fill="#000000" fill-opacity="0.28"/><rect x="79" y="38.5" width="5" height="1.2" fill="#000000" fill-opacity="0.7"/><rect x="84" y="38.1" width="1" height="1.8" fill="#000000" fill-opacity="0.5"/><rect x="86" y="38.1" width="1" height="1.8" fill="#000000" fill-opacity="0.5"/><rect x="4" y="40.5" width="3" height="1.2" fill="#0000ff" fill-opacity="0.7"/><rect x="7" y="40.15" width="1" height="1.55" fill="#0000ff" fill-opacity="0.82"/><rect x="8" y="40.5" width="1" height="1.2" fill="#0000ff" fill-opacity="0.7"/><rect x="9" y="40.15" width="1" height="1.55" fill="#0000ff" fill-opacity="0.82"/><rect x="11" y="40.5" width="4" height="1.2" fill="#000000" fill-opacity="0.7"/><rect x="15" y="40.15" width="1" height="1.55" fill="#000000" fill-opacity="0.82"/><rect x="17" y="41.1" width="1" height="0.6" fill="#000000" fill-opacity="0.28"/><rect x="18" y="40.6" width="1" height="0.9" fill="#000000" fill-opacity="0.42"/><rect x="20" y="40.5" width="1" height="1.5" fill="#000000" fill-opacity="0.8"/><rect x="21" y="40.5" width="1" height="1.2" fill="#000000" fill-opacity="0.7"/><rect x="22" y="40.5" width="1" height="1.5" fill="#000000" fill-opacity="0.8"/><rect x="23" y="40.15" width="1" height="1.55" fill="#000000" fill-opacity="0.82"/><rect x="24" y="40.5" width="2" height="1.2" fill="#000000" fill-opacity="0.7"/><rect x="26" y="40.15" width="1" height="1.55" fill="#000000" fill-opacity="0.82"/><rect x="27" y="41.1" width="1" height="0.6" fill="#000000" fill-opacity="0.28"/><rect x="28" y="40.1" width="1" height="1.8" fill="#000000" fill-opacity="0.5"/><rect x="29" y="40.15" width="1" height="1.55" fill="#0000ff" fill-opacity="0.82"/><rect x="30" y="40.5" width="2" height="1.5" fill="#0000ff" fill-opacity="0.8"/><rect x="32" y="40.5" width="1" height="1.2" fill="#0000ff" fill-opacity="0.7"/><rect x="33" y="40.1" width="1" height="1.8" fill="#000000" fill-opacity="0.5"/><rect x="35" y="40.1" width="1" height="1.8" fill="#000000" fill-opacity="0.5"/><rect x="4" y="42.5" width="4" height="1.2" fill="#0000ff" fill-opacity="0.7"/><rect x="9" y="42.6" width="1" height="0.9" fill="#000000" fill-opacity="0.42"/><rect x="10" y="42.5" width="4" height="1.2" fill="#000000" fill-opacity="0.7"/><rect x="14" y="42.15" width="1" height="1.55" fill="#000000" fill-opacity="0.82"/><rect x="15" y="42.5" width="1" height="1.2" fill="#000000" fill-opacity="0.7"/><rect x="16" y="43.1" width="1" height="0.6" fill="#000000" fill-opacity="0.28"/><rect x="17" y="42.15" width="5" height="1.55" fill="#000000" fill-opacity="0.82"/><rect x="22" y="42.5" width="1" height="1.2" fill="#000000" fill-opacity="0.7"/><rect x="23" y="42.5" width="1" height="1.5" fill="#000000" fill-opacity="0.8"/><rect x="24" y="42.5" width="3" height="1.2" fill="#000000" fill-opacity="0.7"/><rect x="27" y="42.15" width="1" height="1.55" fill="#000000" fill-opacity="0.82"/><rect x="28" y="43.1" width="1" height="0.6" fill="#000000" fill-opacity="0.28"/><rect x="8" y="44.5" width="2" height="1.2" fill="#0000ff" fill-opacity="0.7"/><rect x="10" y="44.15" width="1" height="1.55" fill="#0000ff" fill-opacity="0.82"/><rect x="11" y="44.5" width="3" height="1.2" fill="#0000ff" fill-opacity="0.7"/><rect x="15" y="44.15" width="1" height="1.55" fill="#000000" fill-opacity="0.82"/><rect x="16" y="44.5" width="2" height="1.2" fill="#000000" fill-opacity="0.7"/><rect x="18" y="44.15" width="2" height="1.55" fill="#000000" fill-opacity="0.82"/><rect x="20" y="44.5" width="3" height="1.2" fill="#000000" fill-opacity="0.7"/><rect x="23" y="45.1" width="1" height="0.6" fill="#000000" fill-opacity="0.28"/><rect x="24" y="44.15" width="1" height="1.55" fill="#000000" fill-opacity="0.82"/><rect x="25" y="44.5" width="2" height="1.2" fill="#000000" fill-opacity="0.7"/><rect x="27" y="44.15" width="2" height="1.55" fill="#000000" fill-opacity="0.82"/><rect x="29" y="44.5" width="1" height="1.2" fill="#000000" fill-opacity="0.7"/><rect x="30" y="44.15" width="3" height="1.55" fill="#000000" fill-opacity="0.82"/><rect x="33" y="44.5" width="1" height="1.5" fill="#000000" fill-opacity="0.8"/><rect x="34" y="44.15" width="1" height="1.55" fill="#000000" fill-opacity="0.82"/><rect x="35" y="44.5" width="1" height="1.2" fill="#000000" fill-opacity="0.7"/><rect x="36" y="44.5" width="1" height="1.5" fill="#000000" fill-opacity="0.8"/><rect x="37" y="44.5" width="3" height="1.2" fill="#000000" fill-opacity="0.7"/><rect x="40" y="44.15" width="1" height="1.55" fill="#000000" fill-opacity="0.82"/><rect x="41" y="44.1" width="1" height="1.8" fill="#000000" fill-opacity="0.5"/><rect x="42" y="44.5" width="1" height="1.2" fill="#000000" fill-opacity="0.7"/><rect x="43" y="44.15" width="1" height="1.55" fill="#000000" fill-opacity="0.82"/><rect x="44" y="44.5" width="1" height="1.2" fill="#000000" fill-opacity="0.7"/><rect x="45" y="45.1" width="1" height="0.6" fill="#000000" fill-opacity="0.28"/><rect x="47" y="44.5" width="4" height="1.2" fill="#000000" fill-opacity="0.7"/><rect x="51" y="44.15" width="1" height="1.55" fill="#000000" fill-opacity="0.82"/><rect x="52" y="44.1" width="1" height="1.8" fill="#000000" fill-opacity="0.5"/><rect x="4" y="46.5" width="4" height="1.2" fill="#0000ff" fill-opacity="0.7"/><rect x="9" y="46.6" width="1" height="0.9" fill="#000000" fill-opacity="0.42"/><rect x="10" y="46.5" width="4" height="1.2" fill="#000000" fill-opacity="0.7"/><rect x="14" y="46.15" width="1" height="1.55" fill="#000000" fill-opacity="0.82"/><rect x="15" y="46.5" width="1" height="1.2" fill="#000000" fill-opacity="0.7"/><rect x="16" y="47.1" width="1" height="0.6" fill="#000000" fill-opacity="0.28"/><rect x="17" y="46.15" width="2" height="1.55" fill="#000000" fill-opacity="0.82"/><rect x="19" y="46.5" width="2" height="1.2" fill="#000000" fill-opacity="0.7"/><rect x="21" y="46.15" width="2" height="1.55" fill="#000000" fill-opacity="0.82"/><rect x="23" y="46.5" width="3" height="1.2" fill="#000000" fill-opacity="0.7"/><rect x="26" y="46.15" width="1" height="1.55" fill="#000000" fill-opacity="0.82"/><rect x="27" y="47.1" width="1" height="0.6" fill="#000000" fill-opacity="0.28"/><rect x="8" y="48.5" width="2" height="1.2" fill="#0000ff" fill-opacity="0.7"/><rect x="10" y="48.15" width="1" height="1.55" fill="#0000ff" fill-opacity="0.82"/><rect x="11" y="48.5" width="3" height="1.2" fill="#0000ff" fill-opacity="0.7"/><rect x="15" y="48.15" width="1" height="1.55" fill="#000000" fill-opacity="0.82"/><rect x="16" y="48.5" width="2" height="1.2" fill="#000000" fill-opacity="0.7"/><rect x="18" y="48.15" width="2" height="1.55" fill="#000000" fill-opacity="0.82"/><rect x="20" y="48.5" width="3" height="1.2" fill="#000000" fill-opacity="0.7"/><rect x="23" y="49.1" width="1" height="0.6" fill="#000000" fill-opacity="0.28"/><rect x="24" y="48.15" width="1" height="1.55" fill="#000000" fill-opacity="0.82"/><rect x="25" y="48.5" width="2" height="1.2" fill="#000000" fill-opacity="0.7"/><rect x="27" y="48.15" width="2" height="1.55" fill="#000000" fill-opacity="0.82"/><rect x="29" y="48.5" width="1" height="1.2" fill="#000000" fill-opacity="0.7"/><rect x="30" y="48.15" width="2" height="1.55" fill="#000000" fill-opacity="0.82"/><rect x="32" y="48.5" width="2" height="1.2" fill="#000000" fill-opacity="0.7"/><rect x="34" y="48.15" width="2" height="1.55" fill="#000000" fill-opacity="0.82"/><rect x="36" y="48.5" width="3" height="1.2" fill="#000000" fill-opacity="0.7"/><rect x="39" y="48.15" width="2" height="1.55" fill="#000000" fill-opacity="0.82"/><rect x="41" y="48.5" width="1" height="1.2" fill="#000000" fill-opacity="0.7"/><rect x="42" y="48.5" width="1" height="1.5" fill="#000000" fill-opacity="0.8"/><rect x="43" y="48.5" width="3" height="1.2" fill="#000000" fill-opacity="0.7"/><rect x="46" y="48.15" width="1" height="1.55" fill="#000000" fill-opacity="0.82"/><rect x="47" y="48.1" width="1" height="1.8" fill="#000000" fill-opacity="0.5"/><rect x="48" y="48.5" width="1" height="1.2" fill="#000000" fill-opacity="0.7"/><rect x="49" y="48.15" width="1" height="1.55" fill="#000000" fill-opacity="0.82"/><rect x="50" y="48.5" width="1" height="1.2" fill="#000000" fill-opacity="0.7"/><rect x="51" y="49.1" width="1" height="0.6" fill="#000000" fill-opacity="0.28"/><rect x="53" y="48.5" width="4" height="1.2" fill="#000000" fill-opacity="0.7"/><rect x="57" y="48.15" width="1" height="1.55" fill="#000000" fill-opacity="0.82"/><rect x="58" y="48.1" width="1" height="1.8" fill="#000000" fill-opacity="0.5"/><rect x="4" y="50.15" width="1" height="1.55" fill="#0000ff" fill-opacity="0.82"/><rect x="5" y="50.5" width="1" height="1.2" fill="#0000ff" fill-opacity="0.7"/><rect x="6" y="50.15" width="1" height="1.55" fill="#0000ff" fill-opacity="0.82"/><rect x="7" y="50.5" width="2" height="1.2" fill="#0000ff" fill-opacity="0.7"/><rect x="9" y="50.15" width="2" height="1.55" fill="#0000ff" fill-opacity="0.82"/><rect x="11" y="51.1" width="1" height="0.6" fill="#000000" fill-opacity="0.28"/><rect x="8" y="52.5" width="3" height="1.2" fill="#000000" fill-opacity="0.7"/><rect x="11" y="52.15" width="1" height="1.55" fill="#000000" fill-opacity="0.82"/><rect x="12" y="52.5" width="1" height="1.2" fill="#000000" fill-opacity="0.7"/><rect x="13" y="52.5" width="1" height="1.5" fill="#000000" fill-opacity="0.8"/><rect x="15" y="53.1" width="1" height="0.6" fill="#000000" fill-opacity="0.28"/><rect x="16" y="52.6" width="1" height="0.9" fill="#000000" fill-opacity="0.42"/><rect x="18" y="52.15" width="1" height="1.55" fill="#000000" fill-opacity="0.82"/><rect x="19" y="52.5" width="1" height="1.2" fill="#000000" fill-opacity="0.7"/><rect x="20" y="52.15" width="1" height="1.55" fill="#000000" fill-opacity="0.82"/><rect x="21" y="53.1" width="1" height="0.6" fill="#000000" fill-opacity="0.28"/><rect x="22" y="52.15" width="1" height="1.55" fill="#000000" fill-opacity="0.82"/><rect x="23" y="52.5" width="1" height="1.5" fill="#000000" fill-opacity="0.8"/><rect x="24" y="52.5" width="3" height="1.2" fill="#000000" fill-opacity="0.7"/><rect x="27" y="52.15" width="2" height="1.55" fill="#000000" fill-opacity="0.82"/><rect x="29" y="52.1" width="1" height="1.8" fill="#000000" fill-opacity="0.5"/><rect x="30" y="52.2" width="1" height="0.7" fill="#a31515" fill-opacity="0.4"/><rect x="31" y="52.5" width="2" height="1.2" fill="#a31515" fill-opacity="0.7"/><rect x="33" y="52.15" width="1" height="1.55" fill="#a31515" fill-opacity="0.82"/><rect x="34" y="52.5" width="4" height="1.2" fill="#a31515" fill-opacity="0.7"/><rect x="39" y="52.5" width="4" height="1.2" fill="#a31515" fill-opacity="0.7"/><rect x="43" y="52.15" width="1" height="1.55" fill="#a31515" fill-opacity="0.82"/><rect x="45" y="52.15" width="1" height="1.55" fill="#a31515" fill-opacity="0.82"/><rect x="46" y="52.5" width="2" height="1.5" fill="#a31515" fill-opacity="0.8"/><rect x="48" y="52.5" width="1" height="1.2" fill="#a31515" fill-opacity="0.7"/><rect x="49" y="53.1" width="1" height="0.6" fill="#a31515" fill-opacity="0.28"/><rect x="51" y="52.5" width="2" height="1.2" fill="#a31515" fill-opacity="0.7"/><rect x="53" y="52.5" width="1" height="1.5" fill="#a31515" fill-opacity="0.8"/><rect x="54" y="52.5" width="3" height="1.2" fill="#a31515" fill-opacity="0.7"/><rect x="57" y="52.15" width="1" height="1.55" fill="#a31515" fill-opacity="0.82"/><rect x="58" y="53.1" width="1" height="0.6" fill="#a31515" fill-opacity="0.28"/><rect x="60" y="52.6" width="2" height="0.9" fill="#a31515" fill-opacity="0.42"/><rect x="62" y="52.5" width="1" height="1.2" fill="#a31515" fill-opacity="0.7"/><rect x="63" y="52.2" width="1" height="0.7" fill="#a31515" fill-opacity="0.4"/><rect x="64" y="53.1" width="1" height="0.6" fill="#000000" fill-opacity="0.28"/><rect x="66" y="52.5" width="1" height="1.5" fill="#000000" fill-opacity="0.8"/><rect x="67" y="52.5" width="1" height="1.2" fill="#000000" fill-opacity="0.7"/><rect x="68" y="52.5" width="1" height="1.5" fill="#000000" fill-opacity="0.8"/><rect x="69" y="52.15" width="1" height="1.55" fill="#000000" fill-opacity="0.82"/><rect x="70" y="52.5" width="2" height="1.2" fill="#000000" fill-opacity="0.7"/><rect x="72" y="52.15" width="1" height="1.55" fill="#000000" fill-opacity="0.82"/><rect x="73" y="52.1" width="1" height="1.8" fill="#000000" fill-opacity="0.5"/><rect x="8" y="54.15" width="1" height="1.55" fill="#000000" fill-opacity="0.82"/><rect x="9" y="54.5" width="1" height="1.2" fill="#000000" fill-opacity="0.7"/><rect x="10" y="54.15" width="1" height="1.55" fill="#000000" fill-opacity="0.82"/><rect x="11" y="55.1" width="1" height="0.6" fill="#000000" fill-opacity="0.28"/><rect x="12" y="54.15" width="1" height="1.55" fill="#000000" fill-opacity="0.82"/><rect x="13" y="54.5" width="1" height="1.5" fill="#000000" fill-opacity="0.8"/><rect x="14" y="54.5" width="3" height="1.2" fill="#000000" fill-opacity="0.7"/><rect x="17" y="54.15" width="2" height="1.55" fill="#000000" fill-opacity="0.82"/><rect x="19" y="54.5" width="1" height="1.2" fill="#000000" fill-opacity="0.7"/><rect x="20" y="54.1" width="1" height="1.8" fill="#000000" fill-opacity="0.5"/><rect x="21" y="54.5" width="2" height="1.2" fill="#000000" fill-opacity="0.7"/><rect x="23" y="55.1" width="1" height="0.6" fill="#000000" fill-opacity="0.28"/><rect x="24" y="54.15" width="3" height="1.55" fill="#000000" fill-opacity="0.82"/><rect x="27" y="54.5" width="3" height="1.2" fill="#000000" fill-opacity="0.7"/><rect x="30" y="55.1" width="1" height="0.6" fill="#000000" fill-opacity="0.28"/><rect x="32" y="54.5" width="3" height="1.2" fill="#000000" fill-opacity="0.7"/><rect x="35" y="54.15" width="1" height="1.55" fill="#000000" fill-opacity="0.82"/><rect x="36" y="54.5" width="1" height="1.2" fill="#000000" fill-opacity="0.7"/><rect x="37" y="54.5" width="1" height="1.5" fill="#000000" fill-opacity="0.8"/><rect x="38" y="54.1" width="1" height="1.8" fill="#000000" fill-opacity="0.5"/><rect x="8" y="56.5" width="2" height="1.2" fill="#0000ff" fill-opacity="0.7"/><rect x="10" y="56.15" width="1" height="1.55" fill="#0000ff" fill-opacity="0.82"/><rect x="11" y="56.5" width="3" height="1.2" fill="#0000ff" fill-opacity="0.7"/><rect x="15" y="56.6" width="1" height="0.9" fill="#000000" fill-opacity="0.42"/><rect x="16" y="56.5" width="4" height="1.2" fill="#000000" fill-opacity="0.7"/><rect x="20" y="56.15" width="1" height="1.55" fill="#000000" fill-opacity="0.82"/><rect x="21" y="56.5" width="1" height="1.2" fill="#000000" fill-opacity="0.7"/><rect x="22" y="57.1" width="1" height="0.6" fill="#000000" fill-opacity="0.28"/><rect x="23" y="56.15" width="1" height="1.55" fill="#000000" fill-opacity="0.82"/><rect x="24" y="56.5" width="3" height="1.2" fill="#000000" fill-opacity="0.7"/><rect x="27" y="56.15" width="2" height="1.55" fill="#000000" fill-opacity="0.82"/><rect x="29" y="56.5" width="2" height="1.2" fill="#000000" fill-opacity="0.7"/><rect x="31" y="56.5" width="1" height="1.5" fill="#000000" fill-opacity="0.8"/><rect x="32" y="56.5" width="4" height="1.2" fill="#000000" fill-opacity="0.7"/><rect x="36" y="56.1" width="1" height="1.8" fill="#000000" fill-opacity="0.5"/><rect x="12" y="58.15" width="2" height="1.55" fill="#000000" fill-opacity="0.82"/><rect x="14" y="58.5" width="1" height="1.2" fill="#000000" fill-opacity="0.7"/><rect x="15" y="58.15" width="1" height="1.55" fill="#000000" fill-opacity="0.82"/><rect x="16" y="58.5" width="2" height="1.2" fill="#000000" fill-opacity="0.7"/><rect x="18" y="58.15" width="1" height="1.55" fill="#000000" fill-opacity="0.82"/><rect x="19" y="58.5" width="1" height="1.2" fill="#000000" fill-opacity="0.7"/><rect x="20" y="58.15" width="1" height="1.55" fill="#000000" fill-opacity="0.82"/><rect x="21" y="58.5" width="1" height="1.2" fill="#000000" fill-opacity="0.7"/><rect x="22" y="59.1" width="1" height="0.6" fill="#000000" fill-opacity="0.28"/><rect x="24" y="58.15" width="3" height="1.55" fill="#000000" fill-opacity="0.82"/><rect x="27" y="58.5" width="1" height="1.5" fill="#000000" fill-opacity="0.8"/><rect x="28" y="59.1" width="1" height="0.6" fill="#000000" fill-opacity="0.28"/><rect x="29" y="58.15" width="2" height="1.55" fill="#000000" fill-opacity="0.82"/><rect x="31" y="58.5" width="1" height="1.2" fill="#000000" fill-opacity="0.7"/><rect x="32" y="58.15" width="1" height="1.55" fill="#000000" fill-opacity="0.82"/><rect x="33" y="58.5" width="2" height="1.2" fill="#000000" fill-opacity="0.7"/><rect x="35" y="58.15" width="1" height="1.55" fill="#000000" fill-opacity="0.82"/><rect x="36" y="58.5" width="1" height="1.2" fill="#000000" fill-opacity="0.7"/><rect x="37" y="58.15" width="2" height="1.55" fill="#000000" fill-opacity="0.82"/><rect x="39" y="58.5" width="1" height="1.2" fill="#000000" fill-opacity="0.7"/><rect x="40" y="58.5" width="1" height="1.5" fill="#000000" fill-opacity="0.8"/><rect x="41" y="58.5" width="3" height="1.2" fill="#000000" fill-opacity="0.7"/><rect x="44" y="58.15" width="1" height="1.55" fill="#000000" fill-opacity="0.82"/><rect x="45" y="59.1" width="1" height="0.6" fill="#000000" fill-opacity="0.28"/><rect x="12" y="60.15" width="1" height="1.55" fill="#000000" fill-opacity="0.82"/><rect x="13" y="60.5" width="1" height="1.2" fill="#000000" fill-opacity="0.7"/><rect x="14" y="60.15" width="1" height="1.55" fill="#000000" fill-opacity="0.82"/><rect x="15" y="60.5" width="1" height="1.5" fill="#000000" fill-opacity="0.8"/><rect x="16" y="61.1" width="1" height="0.6" fill="#000000" fill-opacity="0.28"/><rect x="24" y="60.1" width="2" height="1.8" fill="#000000" fill-opacity="0.5"/><rect x="26" y="60.15" width="1" height="1.55" fill="#0000ff" fill-opacity="0.82"/><rect x="27" y="60.5" width="1" height="1.5" fill="#0000ff" fill-opacity="0.8"/><rect x="28" y="60.15" width="1" height="1.55" fill="#0000ff" fill-opacity="0.82"/><rect x="29" y="60.5" width="1" height="1.2" fill="#0000ff" fill-opacity="0.7"/><rect x="30" y="60.1" width="1" height="1.8" fill="#000000" fill-opacity="0.5"/><rect x="31" y="60.5" width="3" height="1.2" fill="#000000" fill-opacity="0.7"/><rect x="34" y="60.15" width="1" height="1.55" fill="#000000" fill-opacity="0.82"/><rect x="35" y="60.5" width="1" height="1.2" fill="#000000" fill-opacity="0.7"/><rect x="36" y="60.5" width="1" height="1.5" fill="#000000" fill-opacity="0.8"/><rect x="37" y="60.1" width="1" height="1.8" fill="#000000" fill-opacity="0.5"/><rect x="38" y="61.1" width="1" height="0.6" fill="#000000" fill-opacity="0.28"/><rect x="8" y="62.1" width="1" height="1.8" fill="#000000" fill-opacity="0.5"/><rect x="9" y="63.1" width="1" height="0.6" fill="#000000" fill-opacity="0.28"/><rect x="11" y="62.5" width="2" height="1.2" fill="#0000ff" fill-opacity="0.7"/><rect x="13" y="62.15" width="1" height="1.55" fill="#0000ff" fill-opacity="0.82"/><rect x="4" y="64.1" width="1" height="1.8" fill="#000000" fill-opacity="0.5"/><rect x="0" y="66.1" width="1" height="1.8" fill="#000000" fill-opacity="0.5"/></svg>
</div>

<!-- ================= FLOAT ================= -->
<div class="abs" style="left:2526px;top:1110.5px;width:9px;height:30px;overflow:hidden"><div class="abs" style="left:5px;top:-15px;width:60px;height:60px;border-radius:30px;background:#1664ff"></div></div>
<div class="abs" style="left:2534px;top:1098px;width:40px;height:120px;border-radius:14px 0 0 0;background:#dfe0e5;box-shadow:-4px 3px 14px rgba(0,0,0,.11)">
  <svg style="left:5.5px;top:32px" width="24" height="26" viewBox="0 0 24 26" fill="none" stroke="#d2d5dc" stroke-width="1.1"><g transform="rotate(-13 11 13)"><rect x="2" y="3" width="15.5" height="8.5"/><rect x="4" y="13.5" width="15.5" height="8.5"/></g></svg>
</div>

</body>
</html>
